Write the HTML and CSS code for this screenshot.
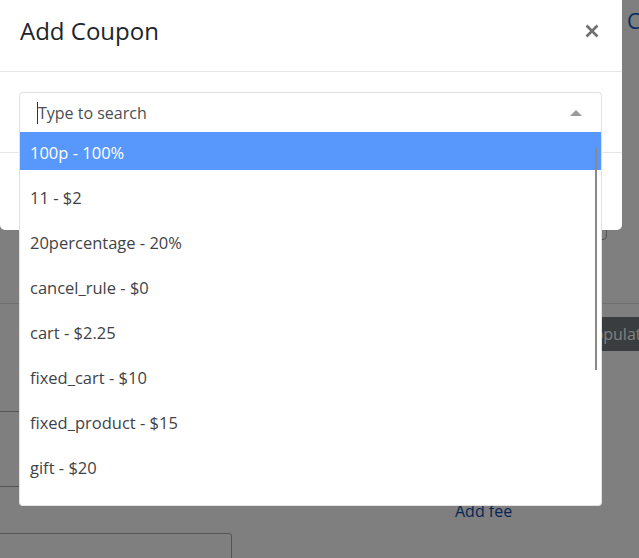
FILE: index.html
```html
<!DOCTYPE html>
<html lang="en">
<head>
<meta charset="utf-8">
<title>Add Coupon</title>
<link rel="stylesheet" href="styles.css">
</head>
<body>
<div class="page">
  <div class="page-top"><a class="link link-top">Customer</a></div>
  <div class="panel"></div>
  <div class="rule"></div>
  <div class="actions"><button class="btn btn-secondary">Populate</button></div>
  <div class="fees">
    <div class="fee-line"></div>
    <div class="fee-line fee-line-last"></div>
  </div>
  <div class="fee-row"><a class="link">Add fee</a></div>
  <div class="field"></div>
</div>

<div class="backdrop"></div>

<div class="modal">
  <div class="modal-header">
    <h5 class="modal-title">Add Coupon</h5>
    <button class="close" aria-label="Close">
      <svg width="14" height="14" viewBox="0 0 14 14"><path d="M1.5 1.5 L12.5 12.5 M12.5 1.5 L1.5 12.5" stroke="#6f6f6f" stroke-width="2.6" stroke-linecap="butt" fill="none"/></svg>
    </button>
  </div>
  <div class="modal-body">
    <div class="select">
      <div class="select-box">
        <span class="caret"></span><span class="placeholder">Type to search</span>
        <span class="arrow"></span>
      </div>
      <div class="dropdown">
        <ul class="options">
          <li class="option is-active">100p - 100%</li>
          <li class="option">11 - $2</li>
          <li class="option">20percentage - 20%</li>
          <li class="option">cancel_rule - $0</li>
          <li class="option">cart - $2.25</li>
          <li class="option">fixed_cart - $10</li>
          <li class="option">fixed_product - $15</li>
          <li class="option">gift - $20</li>
          <li class="option">new_test - $5</li>
          <li class="option">percent - 10%</li>
        </ul>
        <div class="scroll-thumb"></div>
      </div>
    </div>
  </div>
  <div class="modal-footer"></div>
</div>
</body>
</html>
```

FILE: styles.css
```css
* { box-sizing: border-box; }

html, body {
  margin: 0;
  padding: 0;
  width: 639px;
  height: 558px;
  overflow: hidden;
}

body {
  position: relative;
  background: #ffffff;
  font-family: "Open Sans", "Noto Sans", sans-serif;
  font-size: 16px;
  color: #212529;
}

/* ---------- underlying page ---------- */
.page {
  width: 639px;
  height: 558px;
}

.page-top {
  height: 56px;
  padding: 6px 0 0 627px;
  white-space: nowrap;
}

.link {
  color: #0a58c8;
  text-decoration: none;
  line-height: 24px;
}

.link-top {
  font-size: 21px;
  line-height: 30px;
}

.panel {
  height: 184px;
  margin: 0 32px 0 100px;
  border: 1px solid #a8a8a8;
  border-radius: 4px;
}

.rule {
  margin-top: 63px;
  border-top: 1px solid #dcdcdc;
}

.actions {
  margin-top: 13px;
  padding-left: 572px;
  white-space: nowrap;
  height: 34px;
}

.btn {
  font-family: inherit;
  font-size: 16px;
  line-height: 24px;
  height: 34px;
  padding: 5px 12px;
  border: 0;
  border-radius: 4px;
}

.btn-secondary {
  background: #747a80;
  color: #ffffff;
}

.fees {
  margin: 60px 50px 0 -10px;
}

.fee-line {
  height: 75px;
  border-top: 1px solid #a8a8a8;
}

.fee-line-last {
  height: 1px;
}

.fee-row {
  padding: 12px 0 0 455px;
  height: 35px;
}

.fee-row .link {
  color: #0a4cae;
}

.field {
  margin: 11px 0 0 -10px;
  width: 242px;
  height: 40px;
  border: 1px solid #a8a8a8;
  border-radius: 3px;
}

/* ---------- modal ---------- */
.backdrop {
  position: absolute;
  inset: 0;
  background: rgba(0, 0, 0, 0.5);
}

.modal {
  position: absolute;
  top: -9px;
  left: 0;
  width: 622px;
  background: #ffffff;
  border-radius: 0 0 5px 5px;
}

.modal-header {
  display: flex;
  align-items: center;
  justify-content: space-between;
  padding: 22px 23px 22px 20px;
  border-bottom: 1px solid #e5e7ea;
}

.modal-title {
  margin: 0;
  font-size: 24px;
  font-weight: 400;
  line-height: 36px;
  color: #212529;
}

.close {
  display: flex;
  padding: 0;
  margin: 0;
  border: 0;
  background: transparent;
}

.modal-body {
  padding: 20px 20px 20px 19px;
}

.modal-footer {
  height: 78px;
  border-top: 1px solid #e5e7ea;
}

/* ---------- select ---------- */
.select {
  position: relative;
  width: 583px;
}

.select-box {
  display: flex;
  align-items: center;
  height: 40px;
  padding: 0 19px 0 17px;
  border: 1px solid #e2e2e2;
  border-bottom: 0;
  border-radius: 4px 4px 0 0;
}

.caret {
  width: 1px;
  height: 22px;
  background: #333333;
}

.placeholder {
  color: #4a4f54;
  font-size: 16px;
  line-height: 22px;
}

.arrow {
  margin-left: auto;
  width: 0;
  height: 0;
  border-left: 6px solid transparent;
  border-right: 6px solid transparent;
  border-bottom: 6px solid #9a9a9a;
}

.dropdown {
  position: absolute;
  top: 100%;
  left: 0;
  width: 583px;
  height: 374px;
  background: #ffffff;
  border: 1px solid #e2e2e2;
  border-top: 0;
  border-radius: 0 0 4px 4px;
  overflow: hidden;
}

.options {
  list-style: none;
  margin: 0;
  padding: 0;
}

.option {
  padding: 10px 10px 6px;
  margin-bottom: 7px;
  font-size: 16.5px;
  line-height: 22px;
  color: #3f4347;
  white-space: nowrap;
}

.option.is-active {
  background: #5897fb;
  color: #ffffff;
}

.scroll-thumb {
  position: absolute;
  top: 16px;
  right: 4px;
  width: 2px;
  height: 222px;
  background: #8a8a8a;
}
```
